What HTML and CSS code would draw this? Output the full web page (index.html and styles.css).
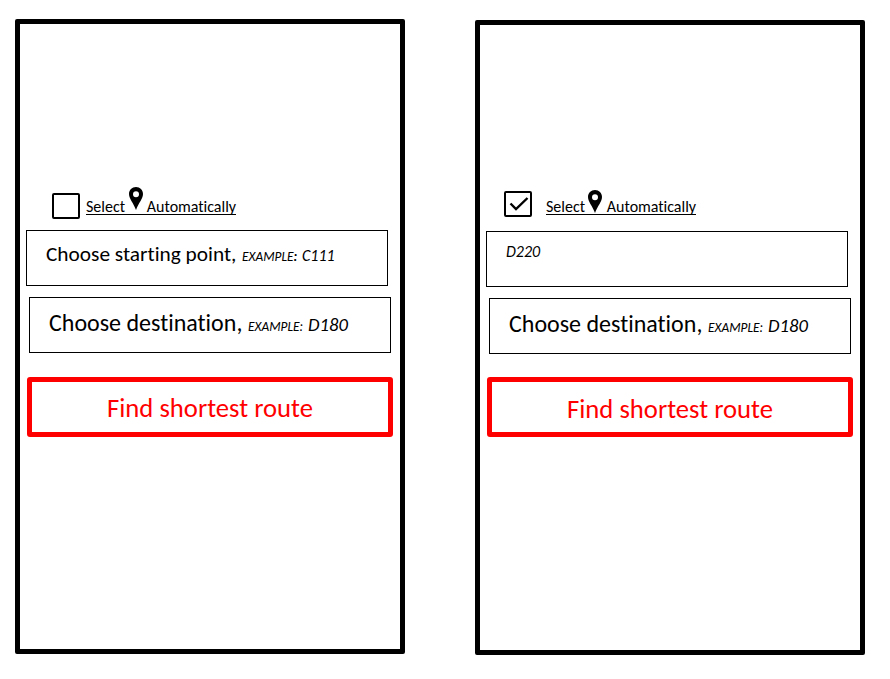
FILE: index.html
```
<!DOCTYPE html>
<html lang="en">
<head>
<meta charset="utf-8">
<title>Find shortest route</title>
<link rel="stylesheet" href="styles.css">
</head>
<body>
<main class="screens">
  <section class="screen">
    <div class="locate">
      <span class="checkbox"></span>
      <div class="locate-label">
        <span class="select">Select</span>
        <svg class="pin" viewBox="0 0 14 23"><path fill-rule="evenodd" d="M7 0C3 0 0 3 0 7c0 4.700 4.500 9 7 16 2.500-7 7-11.300 7-16 0-4-3-7-7-7zm0 4.200a3 3 0 1 1 0 6 3 3 0 0 1 0-6z"/></svg>
        <span class="auto">Automatically</span>
      </div>
    </div>
    <div class="field start"><span class="prompt">Choose starting point,</span><span class="example">EXAMPLE<b>:</b></span><span class="code">C111</span></div>
    <div class="field destination"><span class="prompt">Choose destination,</span><span class="example">EXAMPLE:</span><span class="code">D180</span></div>
    <div class="route"><span>Find shortest route</span></div>
  </section>
  <section class="screen chosen">
    <div class="locate">
      <span class="checkbox"><svg class="tick" viewBox="0 0 24 22"><path d="M4.500 10.500l5.500 5.500L21.500 5"/></svg></span>
      <div class="locate-label">
        <span class="select">Select</span>
        <svg class="pin" viewBox="0 0 14 23"><path fill-rule="evenodd" d="M7 0C3 0 0 3 0 7c0 4.700 4.500 9 7 16 2.500-7 7-11.300 7-16 0-4-3-7-7-7zm0 4.200a3 3 0 1 1 0 6 3 3 0 0 1 0-6z"/></svg>
        <span class="auto">Automatically</span>
      </div>
    </div>
    <div class="field start"><span class="code">D220</span></div>
    <div class="field destination"><span class="prompt">Choose destination,</span><span class="example">EXAMPLE:</span><span class="code">D180</span></div>
    <div class="route"><span>Find shortest route</span></div>
  </section>
</main>
</body>
</html>
```
FILE: styles.css
```
* { box-sizing: border-box; }
body {
  margin: 0;
  background: #fff;
  color: #000;
  font-family: Carlito, Calibri, Lato, sans-serif;
  font-variant-ligatures: none;
}
.screens {
  display: flex;
  align-items: flex-start;
  gap: 70px;
  padding: 19px 15px;
}
.screen {
  width: 390px;
  height: 635px;
  flex: none;
  border: 5px solid #000;
  border-radius: 2px;
  padding: 160px 6px 0;
}
.screen.chosen { margin-top: 1px; }
.locate {
  display: flex;
  align-items: flex-start;
  height: 46px;
  padding-left: 26px;
}
.checkbox {
  width: 28px;
  height: 26px;
  margin: 9px 6px 0 0;
  border: 2px solid #000;
  border-radius: 2px;
}
.chosen .checkbox { margin: 6px 14px 0 -8px; }
.tick { display: block; width: 24px; height: 22px; fill: none; stroke: #000; stroke-width: 2.4; }
.locate-label {
  display: flex;
  width: 150px;
  height: 31px;
  border-bottom: 1px solid #000;
  font-size: 16px;
  line-height: 18px;
  white-space: nowrap;
}
.chosen .locate-label { height: 30px; }
.select, .auto { margin-top: 14px; }
.chosen .select, .chosen .auto { margin-top: 13px; }
.select { width: 43px; }
.auto { margin-left: 4px; letter-spacing: -0.03px; }
.pin { width: 14px; height: 23px; margin-top: 3px; flex: none; }
.chosen .pin { margin: 5px 1px 0 -1px; }
.field {
  display: flex;
  align-items: baseline;
  width: 362px;
  height: 56px;
  border: 1px solid #000;
  padding-left: 19px;
  white-space: nowrap;
  line-height: 24px;
}
.start { padding-top: 11px; }
.destination { margin: 11px 0 0 3px; padding-top: 13px; }
.prompt { width: 196px; font-size: 21.33px; }
.destination .prompt { width: 199px; font-size: 24px; }
.example { width: 60px; font-size: 13.33px; font-style: italic; }
.code { font-size: 16px; font-style: italic; }
.destination .code { font-size: 18.67px; }
.chosen .start { padding-top: 8px; }
.route {
  width: 366px;
  height: 60px;
  margin: 24px 0 0 1px;
  border: 5px solid #f00;
  border-radius: 3px;
  color: #f00;
  font-size: 26.67px;
  line-height: 52px;
  text-align: center;
}
.chosen .route { margin-top: 23px; line-height: 54px; }
```
